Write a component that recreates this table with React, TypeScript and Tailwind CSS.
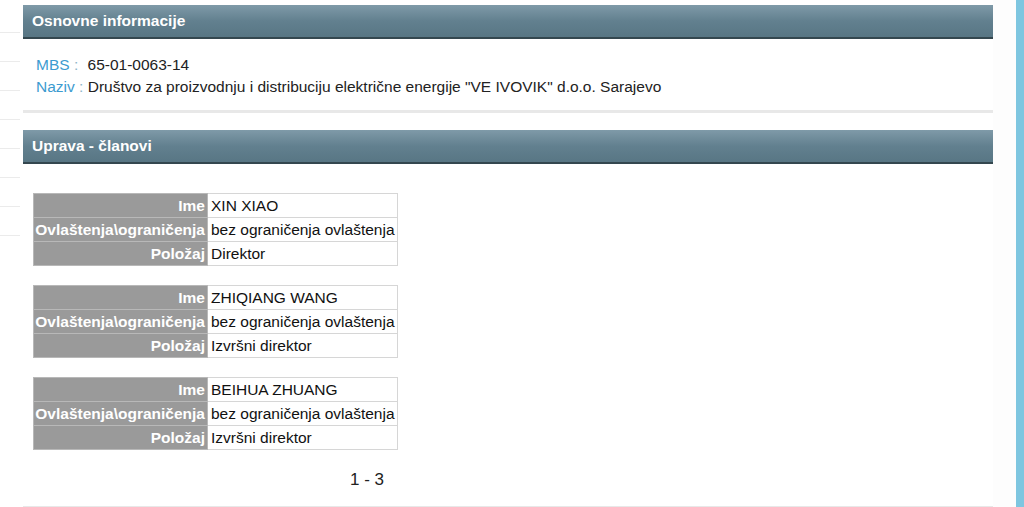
import React from 'react';

type Member = { ime: string; ovl: string; polozaj: string };

const members: Member[] = [
  { ime: 'XIN XIAO', ovl: 'bez ograničenja ovlaštenja', polozaj: 'Direktor' },
  { ime: 'ZHIQIANG WANG', ovl: 'bez ograničenja ovlaštenja', polozaj: 'Izvršni direktor' },
  { ime: 'BEIHUA ZHUANG', ovl: 'bez ograničenja ovlaštenja', polozaj: 'Izvršni direktor' },
];

const SectionHeader = ({ title }: { title: string }) => (
  <div className="h-[34px] flex items-center pl-[9px] bg-gradient-to-b from-[#7f9aa8] via-[#62808f] to-[#587684] border-b-2 border-[#34474f] text-white font-bold text-[15.5px]">
    {title}
  </div>
);

const MemberTable = ({ m }: { m: Member }) => {
  const rows: [string, string][] = [
    ['Ime', m.ime],
    ['Ovlaštenja\\ograničenja', m.ovl],
    ['Položaj', m.polozaj],
  ];
  return (
    <table className="self-start border-collapse border border-[#c4c4c4] text-[15.5px]">
      <tbody>
        {rows.map(([label, value]) => (
          <tr key={label} className="h-[24px]">
            <td className="w-[174px] bg-[#9a9a9a] text-white font-bold text-right pr-[2px] border border-[#b8b8b8] leading-none whitespace-nowrap">
              {label}
            </td>
            <td className="w-[189px] bg-white text-[#111] pl-[3px] pr-[2px] border border-[#d6d6d6] leading-none whitespace-nowrap">
              {value}
            </td>
          </tr>
        ))}
      </tbody>
    </table>
  );
};

export default function App() {
  return (
    <div className="w-[1024px] h-[507px] overflow-hidden bg-white flex font-['Liberation_Sans',Arial,sans-serif]">
      <div className="w-[23px] shrink-0 pt-[4px] pr-[3px]">
        {Array.from({ length: 8 }).map((_, i) => (
          <div key={i} className="h-[29px] border-b border-[#ebebeb]" />
        ))}
      </div>

      <div className="w-[970px] shrink-0 pt-[5px]">
        <SectionHeader title="Osnovne informacije" />
        <div className="pl-[13px] pt-[15px] pb-[12px] text-[15.5px] leading-[22px] text-[#222]">
          <div>
            <span className="text-[#3d9bd0]">MBS</span>
            <span className="text-[#8fb4c8]"> : </span>
            <span className="pl-[5px]">65-01-0063-14</span>
          </div>
          <div>
            <span className="text-[#3d9bd0]">Naziv</span>
            <span className="text-[#8fb4c8]"> : </span>
            Društvo za proizvodnju i distribuciju električne energije "VE IVOVIK" d.o.o. Sarajevo
          </div>
        </div>
        <div className="h-[3px] bg-[#e8e8e8]" />

        <div className="mt-[17px]">
          <SectionHeader title="Uprava - članovi" />
        </div>

        <div className="pl-[10px] pt-[29px] flex flex-col items-start gap-[19px]">
          {members.map((m) => (
            <MemberTable key={m.ime} m={m} />
          ))}
        </div>

        <div className="w-[363px] ml-[10px] pt-[19px] pr-[12px] text-right text-[17px] text-[#222] leading-[22px]">
          1 - 3
        </div>
        <div className="mt-[15px] h-[3px] bg-[#e8e8e8]" />
      </div>

      <div className="w-[23px] shrink-0 bg-[#fdfdfd]" />
      <div className="flex-1 bg-[#7ec6e0]" />
    </div>
  );
}
